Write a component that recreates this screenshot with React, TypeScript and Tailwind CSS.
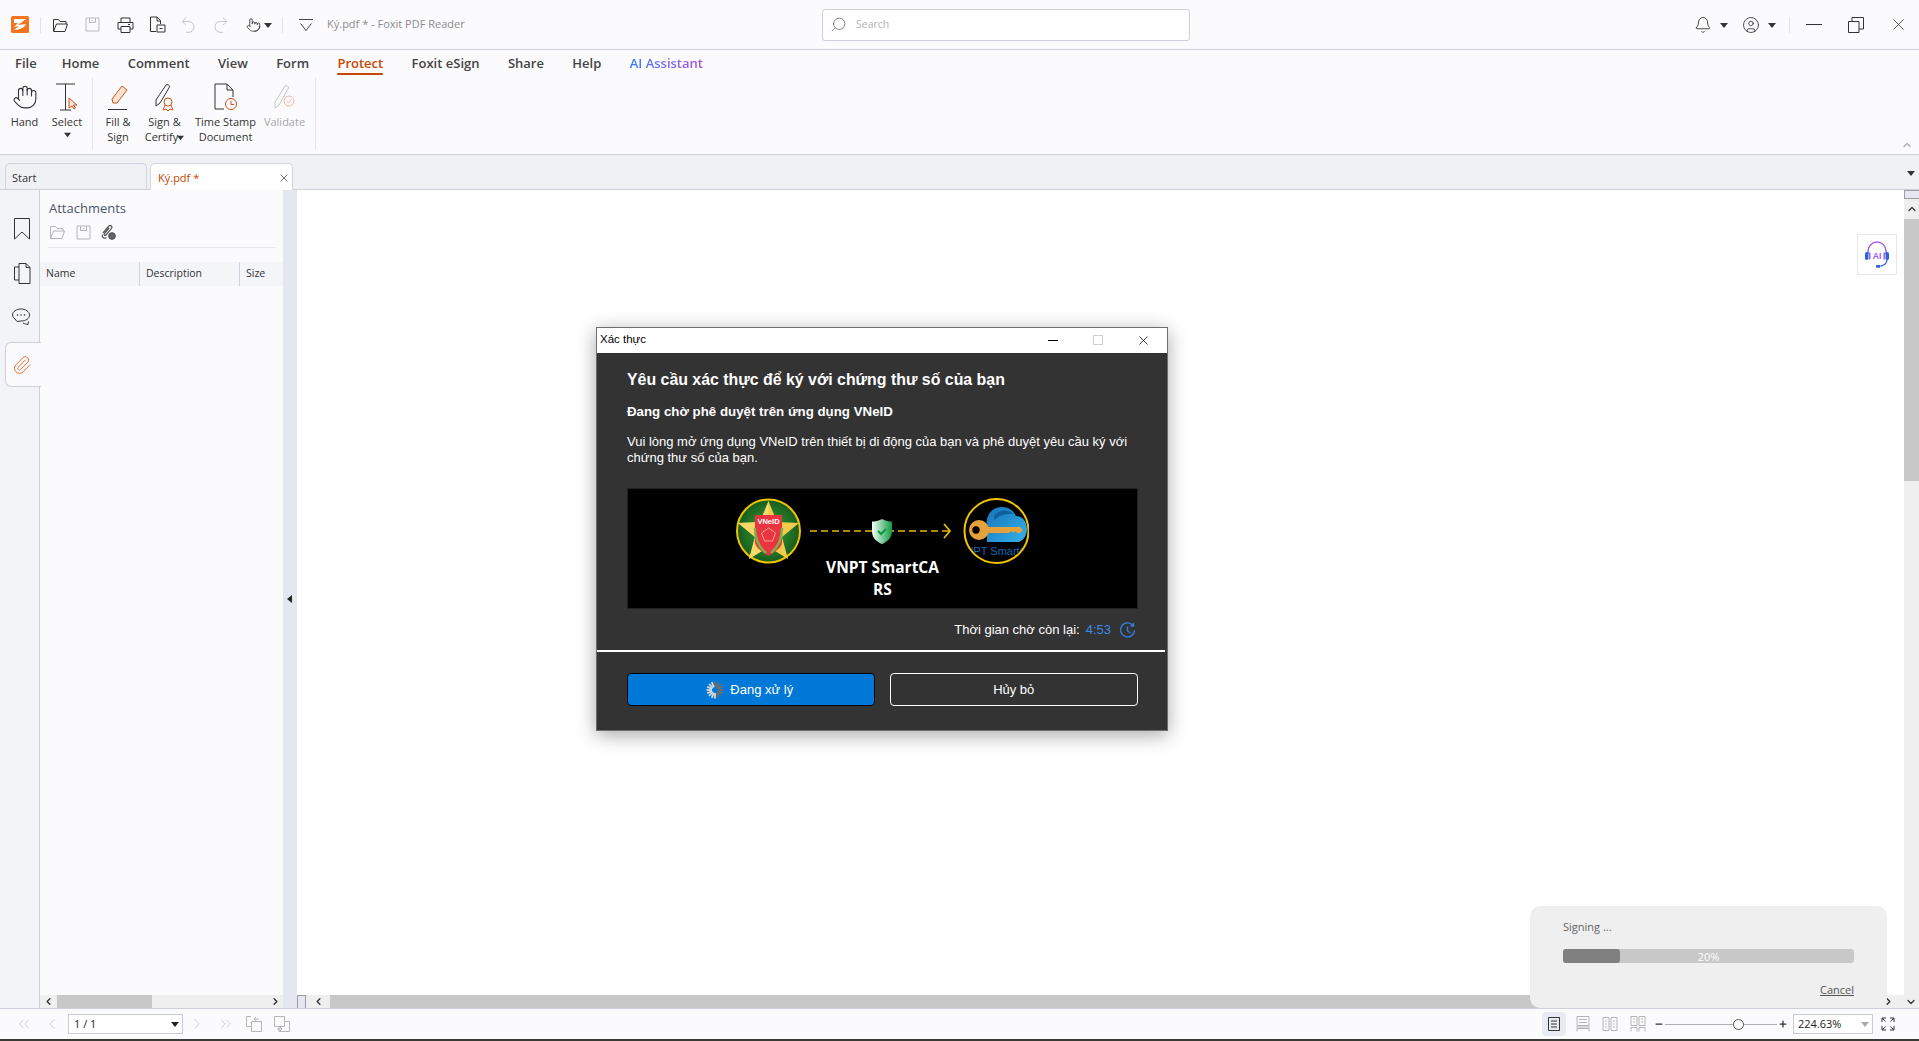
import React from 'react';
import { Bell, CircleUser, Hand, Pointer, Search, X, Minus, Plus, Paperclip, ChevronLeft, ChevronRight, ChevronUp, ChevronDown, ChevronsLeft, ChevronsRight } from 'lucide-react';

const Caret = ({ className = '', dir = 'down' }: { className?: string; dir?: 'down' | 'left' }) => (
  <svg width="8" height="8" viewBox="0 0 8 8" className={className}>
    {dir === 'down' ? <path d="M0 2h8L4 7z" fill="currentColor" /> : <path d="M6 0v8L1 4z" fill="currentColor" />}
  </svg>
);

// Small 16px toolbar glyphs
const Open = ({ c = '#333' }: { c?: string }) => (
  <svg width="17" height="16" viewBox="0 0 17 16" fill="none" stroke={c}>
    <path d="M1.5 14V2.5h5l1.5 2h6V7M1.5 14.5h11.5l2.5-7.5H4.5z" />
  </svg>
);
const SaveIcon = ({ c = '#bbb' }: { c?: string }) => (
  <svg width="15" height="15" viewBox="0 0 15 15" fill="none" stroke={c}>
    <path d="M1 1h13v13H1z" /><path d="M4.5 1v4.5h6V1M7.5 3v1" />
  </svg>
);
const PrintIcon = () => (
  <svg width="17" height="16" viewBox="0 0 17 16" fill="none" stroke="#333">
    <path d="M4 5V1h9v4M4 12H1V5.5h15V12h-3" /><path d="M4 9.5h9v6H4zM11 7.5h2" />
  </svg>
);
const PageIcon = () => (
  <svg width="17" height="17" viewBox="0 0 17 17" fill="none" stroke="#333">
    <path d="M7 15.5H1.5V1H8l3.5 3.5V8" /><path d="M8 1v4h3.5" /><path d="M8 9h8v7H8zM10.5 12.5h3" />
  </svg>
);
const Undo = ({ flip = false }: { flip?: boolean }) => (
  <svg width="15" height="16" viewBox="0 0 15 16" fill="none" stroke="#c6c6c6" className={flip ? '-scale-x-100' : ''}>
    <path d="M5 .8 1.2 4.5 5 8.2M1.2 4.5H8a5 5.4 0 0 1 0 10.8H5" />
  </svg>
);
const ViewIcon = ({ kind }: { kind: number }) => {
  const c = kind === 0 ? '#333' : '#b5b5b5';
  return (
    <svg width="16" height="16" viewBox="0 0 16 16" fill="none" stroke={c}>
      {kind === 0 && <path d="M2.5 1.5h11v13h-11zM5 5h6M5 8h6M5 11h6" />}
      {kind === 1 && <path d="M2 .5h12v9H2zM4 3.5h8M4 6.5h8M2 15.5v-3h12v3M1 11h14" />}
      {kind === 2 && <path d="M1 1.5h6v13H1zM9 1.5h6v13H9zM3 5h2M3 8h2M3 11h2M11 5h2M11 8h2M11 11h2" />}
      {kind === 3 && <path d="M1 .5h6v9H1zM9 .5h6v9H9zM3 3h2M3 6h2M11 3h2M11 6h2M1 15.5v-4h6v4M9 15.5v-4h6v4" />}
    </svg>
  );
};

const menus = ['Home', 'Comment', 'View', 'Form'];
const menus2 = ['Foxit eSign', 'Share', 'Help'];

const RibbonBtn = ({ w, icon, lines, muted, caret, below }: { w: string; icon: React.ReactNode; lines: string[]; muted?: boolean; caret?: boolean; below?: boolean }) => (
  <div className={`flex flex-col items-center shrink-0 pt-[5px] ${w} ${muted ? 'text-[#a6a6a6]' : 'text-[#333]'}`}>
    <div className="h-[28px] flex items-center justify-center">{icon}</div>
    <div className="mt-[3px] text-[11px] leading-[15px] text-center whitespace-nowrap">
      {lines.map((l, i) => (
        <div key={l}>
          {l}
          {caret && i === 1 && <Caret className="inline -ml-px mb-px w-[7px] h-[7px]" />}
        </div>
      ))}
    </div>
    {below && <Caret className="mt-[2px] w-[7px] h-[7px]" />}
  </div>
);

// VNeID -> SmartCA drawing inside the dialog
const FlowArt = () => (
  <svg width="293" height="66" viewBox="0 0 293 66" className="shrink-0">
    <defs>
      <radialGradient id="grn"><stop offset="0.4" stopColor="#2d8a2b" /><stop offset="1" stopColor="#175c1e" /></radialGradient>
      <linearGradient id="shd" x1="0" x2="1"><stop offset="0" stopColor="#f4fff6" /><stop offset="1" stopColor="#0f9a45" /></linearGradient>
      <linearGradient id="cld" x1="0" y1="0" x2="1" y2="1"><stop offset="0" stopColor="#1573b8" /><stop offset="1" stopColor="#35b0ea" /></linearGradient>
      <clipPath id="rc"><circle cx="260.5" cy="33" r="31" /></clipPath>
    </defs>
    <circle cx="32.5" cy="33" r="31.5" fill="url(#grn)" stroke="#f0c400" strokeWidth="2" />
    <path d="M32.5 3 41 24l22 1-17 14 6 22-19.5-12L13 61l6-22L2 25l22-1z" fill="#f3cb4d" />
    <path d="M32.5 3v46L13 61l6-22L2 25l22-1z" fill="#fbe17e" opacity=".6" />
    <path d="M19 17h27v27c0 6-8 10-13.500 14C27 54 19 50 19 44z" fill="#ea3440" />
    <path d="M19 30c0 12 5 20 11 25M46 30c0 12-5 20-11 25" stroke="#7fb04a" strokeWidth="2.5" fill="none" />
    <text x="32.5" y="26" fontSize="7.5" fontWeight="700" fill="#fff" textAnchor="middle" fontFamily="Liberation Sans, sans-serif">VNeID</text>
    <path d="M32.5 30l7 5-3 8h-8l-3-8z" fill="none" stroke="#f6c7a0" strokeWidth=".8" />
    <path d="M74 33h140" stroke="#e6b800" strokeWidth="1.6" strokeDasharray="7 4" />
    <path d="M208 26l6 7-6 7" stroke="#e6b800" strokeWidth="1.8" fill="none" />
    <path d="M146 21c4 2 7 2.500 10 2.500V33c0 7-5 11-10 13-5-2-10-6-10-13v-9.500c3 0 6-.5 10-2.500z" fill="url(#shd)" />
    <path d="M142 33l3 3 5-5" stroke="#0e9a3e" strokeWidth="2" fill="none" />
    <circle cx="260.5" cy="33" r="32" fill="#000" stroke="#f0c400" strokeWidth="2" />
    <g clipPath="url(#rc)">
      <path d="M251 30c-2-12 4-21 15-21 7 0 12 4 14 9 7 0 11 6 11 13 0 6-3 11-8 13h-32z" fill="url(#cld)" />
      <path d="M258 18c4-6 13-8 20-2-8-1-14 1-20 6z" fill="#0f5f9f" />
      <circle cx="243" cy="32" r="10" fill="#e5a13c" />
      <circle cx="240" cy="32" r="3.700" fill="#000" />
      <path d="M251 29h33l3 3-3 3h-3l-2-2-2 2-2-2-2 2h-22z" fill="#e5a13c" />
      <text x="260.500" y="57" fontSize="11" fill="#1269bd" textAnchor="middle" fontFamily="Liberation Sans, sans-serif">VNPT SmartCA</text>
    </g>
  </svg>
);

const Spinner = () => (
  <svg width="18" height="18" viewBox="0 0 18 18" className="shrink-0">
    {Array.from({ length: 16 }).map((_, i) => (
      <line key={i} x1="9" y1="6" x2="9" y2="0.500" stroke={i < 8 ? '#6e6e6e' : '#dedede'} strokeWidth="1.700" transform={`rotate(${i * 22.500} 9 9)`} />
    ))}
  </svg>
);

const AuthDialog = () => (
  <div className="absolute left-[596px] top-[327px] w-[572px] h-[404px] bg-[#333333] border border-[#6e6e6e] shadow-[0_4px_18px_rgba(0,0,0,0.35)] font-['Liberation_Sans',sans-serif] text-white flex flex-col">
    <div className="h-[25px] bg-white text-black flex items-center shrink-0 pl-[3px] pb-px text-[11.500px]">
      <span className="whitespace-nowrap">Xác thực</span>
      <div className="w-[10px] h-px bg-black ml-auto" />
      <div className="w-[10px] h-[10px] border border-[#cfcfcf] ml-[35px]" />
      <X className="w-[15px] h-[15px] ml-[33px] mr-[16px] text-black" strokeWidth={1.200} />
    </div>
    <div className="pl-[30px] pr-[29px] flex-1 flex flex-col min-h-0">
      <div className="mt-[17px] text-[15.900px] leading-[20px] font-bold whitespace-nowrap">Yêu cầu xác thực để ký với chứng thư số của bạn</div>
      <div className="mt-[14px] text-[13.300px] leading-[16px] font-bold whitespace-nowrap">Đang chờ phê duyệt trên ứng dụng VNeID</div>
      <div className="mt-[14px] text-[13px] leading-[15.500px]">
        Vui lòng mở ứng dụng VNeID trên thiết bị di động của bạn và phê duyệt yêu cầu ký với chứng thư số của bạn.
      </div>
      <div className="mt-[23px] w-[511px] h-[121px] bg-black border border-[#222] flex flex-col items-center pt-[9px] shrink-0">
        <FlowArt />
        <div className="mt-[-8px] font-['Open_Sans',sans-serif] font-bold text-[15.500px] leading-[22px] text-center w-[130px]">VNPT SmartCA RS</div>
      </div>
      <div className="mt-[13px] h-[16px] flex items-center justify-end text-[13px] pr-[2px]">
        <span>Thời gian chờ còn lại:</span>
        <span className="ml-[6px] text-[#3b8beb]">4:53</span>
        <svg width="17" height="17" viewBox="0 0 17 17" fill="none" stroke="#2f7fe0" strokeWidth="1.400" className="ml-[8px]">
          <path d="M14 3.500A7 7 0 1 0 15.500 8.500M14.500 1v3h-3M8.500 4.500v4.500l3 2" />
        </svg>
      </div>
    </div>
    <div className="h-[2px] bg-white mr-[2px] shrink-0" />
    <div className="h-[78px] pl-[30px] pr-[29px] pt-[21px] flex gap-[15px] text-[13px] shrink-0">
      <div className="w-[248px] h-[33px] bg-[#0078d7] border border-black rounded-[4px] flex items-center justify-center gap-[6px] pr-[2px]">
        <Spinner />
        <span>Đang xử lý</span>
      </div>
      <div className="w-[249px] h-[33px] border border-white rounded-[4px] flex items-center justify-center">Hủy bỏ</div>
    </div>
  </div>
);

const SigningToast = () => (
  <div className="absolute left-[1530px] top-[906px] w-[357px] h-[102px] bg-[#efefef] rounded-[10px] pl-[33px] pr-[33px] pt-[12px] text-[#666] font-['Open_Sans',sans-serif] text-[11px]">
    <div className="leading-[18px]">Signing ...</div>
    <div className="mt-[13px] h-[14px] bg-[#c8c8c8] rounded-[3px] relative text-center text-white leading-[15px]">
      <div className="absolute left-0 top-0 h-full w-[57px] bg-[#808080] rounded-[3px]" />
      <span className="relative">20%</span>
    </div>
    <div className="mt-[19px] text-right underline leading-[15px] text-[#555]">Cancel</div>
  </div>
);

export default function App() {
  return (
    <div className="relative w-[1919px] h-[1041px] overflow-hidden bg-white font-['Open_Sans',sans-serif] text-[#333] flex flex-col">
      {/* title bar */}
      <div className="h-[50px] shrink-0 bg-[#fbfbfd] border-b border-[#cfcfdc] flex items-center">
        <svg width="18" height="17" viewBox="0 0 18 17" className="ml-[11px] shrink-0">
          <rect width="18" height="17" rx="1.500" fill="#f47420" />
          <path d="M3 3h12L7 9l8-1-2 3c-3 2-7 3-10 3l5-4-5 1 4-4H3z" fill="#fff" />
        </svg>
        <div className="w-px h-[16px] bg-[#e2e2e8] ml-[11px]" />
        <div className="ml-[11px]"><Open /></div>
        <div className="ml-[16px]"><SaveIcon /></div>
        <div className="ml-[17px]"><PrintIcon /></div>
        <div className="ml-[15px]"><PageIcon /></div>
        <div className="ml-[15px]"><Undo /></div>
        <div className="ml-[17px]"><Undo flip /></div>
        <Pointer className="ml-[18px] w-[15px] h-[18px]" strokeWidth={1.300} />
        <Caret className="ml-[3px] text-[#333]" />
        <div className="w-px h-[16px] bg-[#e2e2e8] ml-[10px]" />
        <svg width="14" height="14" viewBox="0 0 14 14" fill="none" stroke="#444" className="ml-[16px]">
          <path d="M0 1.500h14M1.500 5.500 7 12.500l5.500-7" />
        </svg>
        <span className="ml-[14px] w-[140px] text-[11px] text-[#8c8c8c] whitespace-nowrap">Ký.pdf * - Foxit PDF Reader</span>
        <div className="ml-[355px] w-[368px] h-[32px] bg-white border border-[#cdcfdc] rounded-[3px] flex items-center">
          <Search className="ml-[7px] w-[17px] h-[17px] text-[#555] -scale-x-100" strokeWidth={1} />
          <span className="ml-[9px] text-[10.500px] text-[#b4b4b4]">Search</span>
        </div>
        <Bell className="ml-[504px] w-[18px] h-[18px]" strokeWidth={1.200} />
        <Caret className="ml-[8px] text-[#333]" />
        <CircleUser className="ml-[14px] w-[18px] h-[18px]" strokeWidth={1.100} />
        <Caret className="ml-[8px] text-[#333]" />
        <div className="w-px h-[16px] bg-[#e2e2e8] ml-[13px]" />
        <div className="ml-[16px] w-[16px] h-px bg-[#333]" />
        <svg width="16" height="16" viewBox="0 0 16 16" fill="none" stroke="#333" className="ml-[26px]">
          <path d="M.5 4.500h10.500v11H.5zM4 4.500V.5h11.500v11.500H11" />
        </svg>
        <X className="ml-[25px] w-[19px] h-[19px]" strokeWidth={1} />
      </div>

      {/* menu + ribbon */}
      <div className="h-[105px] shrink-0 bg-[#fbfbfd] border-b border-[#cfcfdc] relative">
        <div className="h-[27px] flex items-center pl-[15px] text-[13px] font-semibold text-[#444] leading-none whitespace-nowrap">
          <span className="mr-[25px]">File</span>
          <div className="flex gap-[28.400px]">
            {menus.map(m => <span key={m}>{m}</span>)}
            <span className="relative text-[#c84600]">
              Protect
              <span className="absolute left-0 right-0 -bottom-[5px] h-[2.500px] rounded-full bg-[#c84600]" />
            </span>
            {menus2.map(m => <span key={m}>{m}</span>)}
            <span className="bg-linear-to-r from-[#2a7ff5] to-[#a04de6] bg-clip-text text-transparent">AI Assistant</span>
          </div>
        </div>
        <div className="flex pl-[5px] h-[72px] mt-px">
          <RibbonBtn w="w-[39px]" lines={['Hand']} icon={<Hand className="w-[26px] h-[28px]" strokeWidth={1} />} />
          <RibbonBtn
            w="w-[46px]"
            below
            lines={['Select']}
            icon={
              <svg width="24" height="28" viewBox="0 0 24 28" fill="none">
                <path d="M1 1h19M10.500 1v26M5 27h11" stroke="#333" />
                <path d="M14 15v10l3-2 2 3 1.500-1-2-3h3.500z" stroke="#d0501a" fill="#fbe6d8" />
              </svg>
            }
          />
          <div className="w-px h-[72px] bg-[#e4e4ea] ml-[2px] mr-[2px]" />
          <RibbonBtn
            w="w-[46px]"
            lines={['Fill &', 'Sign']}
            icon={
              <svg width="20" height="27" viewBox="0 0 20 27" fill="none">
                <path d="M5 19l-1-4L14 2l5 4L9 19z" stroke="#d0501a" fill="#fbe3d3" />
                <path d="M0 25.500h19" stroke="#333" />
              </svg>
            }
          />
          <RibbonBtn
            w="w-[47px]"
            caret
            lines={['Sign &', 'Certify']}
            icon={
              <svg width="20" height="29" viewBox="0 0 20 29" fill="none">
                <path d="M1 17 11 2c1-1 4 0 3.500 2L5 20l-4 3z" stroke="#333" />
                <circle cx="13" cy="19" r="4" stroke="#d0501a" />
                <path d="M10 22l-2 5 3-1 2 2 2-2 3 1-2-5" stroke="#d0501a" />
              </svg>
            }
          />
          <RibbonBtn
            w="w-[75px]"
            lines={['Time Stamp', 'Document']}
            icon={
              <svg width="24" height="29" viewBox="0 0 24 29" fill="none">
                <path d="M10 26H1V1h12l6 6v7M13 1v6h6" stroke="#333" />
                <circle cx="17" cy="21" r="5.500" stroke="#d0501a" />
                <path d="M17 18v3.500h3" stroke="#d0501a" />
              </svg>
            }
          />
          <RibbonBtn
            w="w-[43px]"
            muted
            lines={['Validate']}
            icon={
              <svg width="22" height="28" viewBox="0 0 22 28" fill="none">
                <path d="M1 19 11 3c1-1 4 0 3.500 2L5 22l-4 3z" stroke="#c8c8c8" />
                <circle cx="15" cy="18" r="5" stroke="#f0b9a0" />
                <path d="M12.500 18l2 2 3-3.500" stroke="#f0b9a0" />
              </svg>
            }
          />
          <div className="w-px h-[72px] bg-[#e4e4ea] ml-[9px]" />
        </div>
        <ChevronUp className="absolute right-[6px] bottom-[3px] w-[12px] h-[12px] text-[#aaa]" strokeWidth={2.500} />
      </div>

      {/* tab strip */}
      <div className="h-[35px] shrink-0 bg-[#f0f1f5] border-b border-[#cfcfdc] flex items-end pl-[5px] text-[11px] relative">
        <div className="w-[142px] h-[27px] -mb-px border border-b-0 border-[#d2d4e0] rounded-t-[5px] flex items-center pl-[6px] pt-[2px] text-[#333]">Start</div>
        <div className="ml-[3px] w-[143px] h-[27px] -mb-px border border-b-0 border-[#d2d4e0] rounded-t-[5px] bg-white flex items-center pl-[7px] pt-[2px] text-[#c84600] relative z-10">
          Ký.pdf *
          <X className="ml-auto mr-[2px] w-[12px] h-[12px] text-[#333]" strokeWidth={1.500} />
        </div>
        <Caret className="absolute right-[4px] top-[14px] text-[#333]" />
      </div>

      {/* body */}
      <div className="flex-1 flex min-h-0">
        <div className="w-[40px] shrink-0 bg-[#f3f4f8] border-r border-[#cfcfdc] flex flex-col relative">
          <svg width="16" height="22" viewBox="0 0 16 22" fill="none" stroke="#333" className="ml-[14px] mt-[28px]">
            <path d="M.5.5h15v20.500L8 14 .5 21z" />
          </svg>
          <svg width="17" height="21" viewBox="0 0 17 21" fill="none" stroke="#333" className="ml-[14px] mt-[23px]">
            <path d="M5 17H.5V4H5M5 .5h7l4 4v16H5z" /><path d="M12 .5v4h4" />
          </svg>
          <svg width="19" height="18" viewBox="0 0 19 18" fill="none" stroke="#333" className="ml-[12px] mt-[24px]">
            <path d="M9 1c4.500 0 8.500 2.500 8.500 6S14 13 9 13l-4 .5L3 11C1.500 10 .5 8.500.5 7 .5 3.500 4.500 1 9 1z" />
            <path d="M11 15c2 1 3 1 5 1.500l.5-3" />
            <path d="M5.500 7h.01M9 7h.01M12.500 7h.01" strokeWidth="1.600" strokeLinecap="round" />
          </svg>
          <div className="ml-[5px] mt-[16px] w-[36px] h-[45px] bg-[#fbfbfd] border border-r-0 border-[#cfcfdc] rounded-l-[6px] flex items-center justify-center pr-[3px]">
            <Paperclip className="w-[20px] h-[20px] text-[#e0703a]" strokeWidth={1.200} />
          </div>
        </div>

        <div className="w-[243px] shrink-0 bg-[#fbfbfd] flex flex-col">
          <div className="pl-[9px] pt-[9px] text-[13px] leading-[18px] text-[#4b5568]">Attachments</div>
          <div className="pl-[9px] mt-[7px] h-[16px] flex items-center gap-[10px]">
            <Open c="#b5b5b5" />
            <SaveIcon c="#b5b5b5" />
            <svg width="15" height="16" viewBox="0 0 15 16" fill="none" stroke="#555">
              <path d="M2 9 8 2c1.500-1.500 4 .5 2.500 2.500L5 11c-1 1-2.500 0-1.500-1.500L8 4M5.500 13.500c-2 1.500-5 0-4-3" strokeWidth="1.200" />
              <circle cx="11" cy="12" r="3.300" fill="#666" stroke="#444" />
            </svg>
          </div>
          <div className="h-px bg-[#e6e6ec] ml-[8px] mr-[7px] mt-[7px]" />
          <div className="mt-[14px] h-[24px] bg-[#f3f5f9] flex text-[10.500px] text-[#333] items-center">
            <div className="w-[100px] h-full border-r border-[#cfd2de] flex items-center pl-[6px]">Name</div>
            <div className="w-[100px] h-full border-r border-[#cfd2de] flex items-center pl-[6px]">Description</div>
            <div className="pl-[6px]">Size</div>
          </div>
          <div className="flex-1" />
          <div className="h-[13px] bg-[#efefef] flex items-center">
            <div className="w-[17px] flex justify-center"><ChevronLeft className="w-[11px] h-[11px]" strokeWidth={3} /></div>
            <div className="w-[95px] h-full bg-[#c8c8c8]" />
            <div className="flex-1" />
            <ChevronRight className="w-[11px] h-[11px] mr-[2px]" strokeWidth={3} />
          </div>
        </div>

        <div className="w-[14px] shrink-0 bg-[#e4e7f0] flex items-center justify-center">
          <Caret dir="left" className="text-[#222] h-[10px]" />
        </div>

        <div className="flex-1 min-w-0 flex flex-col relative">
          <div className="flex-1 flex min-h-0">
            <div className="flex-1 relative">
              <div className="absolute left-[1560px] top-[44px] w-[40px] h-[41px] bg-white border border-[#e6e8f0] flex items-center justify-center">
                <svg width="26" height="28" viewBox="0 0 26 28" fill="none">
                  <defs>
                    <linearGradient id="hd" x1="0" y1="0" x2="0" y2="1"><stop offset="0" stopColor="#b05cf0" /><stop offset="1" stopColor="#2a66d8" /></linearGradient>
                  </defs>
                  <path d="M4 13V10a9 9 0 0 1 18 0v3M23 18c0 5-3 6-6 7" stroke="url(#hd)" strokeWidth="1.400" />
                  <rect x="1" y="11" width="3.500" height="8" rx="1.700" fill="#2a66d8" />
                  <rect x="21.500" y="11" width="3.500" height="8" rx="1.700" fill="#2a66d8" />
                  <rect x="5" y="11.500" width="1.500" height="7" fill="#a45ff0" />
                  <rect x="19.500" y="11.500" width="1.500" height="7" fill="#a45ff0" />
                  <rect x="12" y="24" width="4.500" height="2.800" rx="1" fill="#2a66d8" />
                  <text x="13" y="18" fontSize="8.500" fontWeight="700" textAnchor="middle" fill="#9a5bea" fontFamily="Liberation Sans, sans-serif">AI</text>
                </svg>
              </div>
            </div>
            <div className="w-[15px] shrink-0 bg-[#efefef] flex flex-col">
              <div className="h-[9px] bg-[#e4e7f0] border border-r-0 border-[#9a9ca8]" />
              <div className="h-[20px] flex items-center justify-center"><ChevronUp className="w-[12px] h-[12px]" strokeWidth={2.500} /></div>
              <div className="h-[262px] bg-[#c8c8c8]" />
              <div className="flex-1" />
            </div>
          </div>
          <div className="h-[13px] shrink-0 bg-[#efefef] flex items-center">
            <div className="w-[9px] h-full bg-[#e4e7f0] border border-[#9a9ca8] border-b-0" />
            <div className="w-[24px] flex justify-center"><ChevronLeft className="w-[11px] h-[11px]" strokeWidth={3} /></div>
            <div className="w-[1358px] h-full bg-[#c8c8c8]" />
            <div className="flex-1" />
            <ChevronRight className="w-[11px] h-[11px] mr-[11px]" strokeWidth={3} />
            <ChevronDown className="w-[12px] h-[12px] mr-[2px]" strokeWidth={2.500} />
          </div>
        </div>
      </div>

      {/* status bar */}
      <div className="h-[33px] shrink-0 bg-[#fbfbfd] border-t border-[#cfcfdc] border-b-[2px] border-b-[#3a3a34] flex items-center text-[11px]">
        <ChevronsLeft className="ml-[15px] w-[18px] h-[18px] text-[#bdbdbd]" strokeWidth={1} />
        <ChevronLeft className="ml-[10px] w-[18px] h-[18px] text-[#bdbdbd]" strokeWidth={1} />
        <div className="ml-[7px] w-[115px] h-[20px] bg-white border border-[#c8cbdc] flex items-center pl-[5px] text-[#222]">
          1 / 1
          <Caret className="ml-auto mr-[3px] text-[#222]" />
        </div>
        <ChevronRight className="ml-[5px] w-[18px] h-[18px] text-[#bdbdbd]" strokeWidth={1} />
        <ChevronsRight className="ml-[11px] w-[18px] h-[18px] text-[#bdbdbd]" strokeWidth={1} />
        <svg width="16" height="16" viewBox="0 0 16 16" fill="none" stroke="#b5b5b5" className="ml-[11px]">
          <path d="M5 10.500H.5V.5H5M5.500 5.500h10v10h-10zM13 3H8l2-2M8 3l2 2" />
        </svg>
        <svg width="16" height="16" viewBox="0 0 16 16" fill="none" stroke="#b5b5b5" className="ml-[12px]">
          <path d="M.5.5h10v10H.5zM5 10.500v5h10.500v-10h-5M3 13h5l-2-2M8 13l-2 2" />
        </svg>
        <div className="ml-[1252px] w-[24px] h-[24px] rounded-[4px] bg-[#e8ebf3] flex items-center justify-center"><ViewIcon kind={0} /></div>
        <div className="ml-[9px]"><ViewIcon kind={1} /></div>
        <div className="ml-[11px]"><ViewIcon kind={2} /></div>
        <div className="ml-[12px]"><ViewIcon kind={3} /></div>
        <Minus className="ml-[8px] w-[10px] h-[10px]" strokeWidth={3} />
        <div className="ml-[1px] w-[112px] h-px bg-[#b0b0b0] relative">
          <div className="absolute left-[68px] -top-[5px] w-[11px] h-[11px] rounded-full bg-white border border-[#555]" />
        </div>
        <Plus className="ml-[1px] w-[10px] h-[10px]" strokeWidth={3} />
        <div className="ml-[5px] w-[80px] h-[20px] bg-white border border-[#c8cbdc] flex items-center pl-[4px] text-[#222]">
          224.63%
          <Caret className="ml-auto mr-[3px] text-[#aaa]" />
        </div>
        <svg width="14" height="14" viewBox="0 0 14 14" fill="none" stroke="#333" className="ml-[8px]">
          <path d="M1 5V1h4M1 1l3.500 3.500M9 1h4v4M13 1 9.500 4.500M1 9v4h4M1 13l3.500-3.500M9 13h4V9M13 13 9.500 9.500" />
        </svg>
      </div>

      <AuthDialog />
      <SigningToast />
    </div>
  );
}
